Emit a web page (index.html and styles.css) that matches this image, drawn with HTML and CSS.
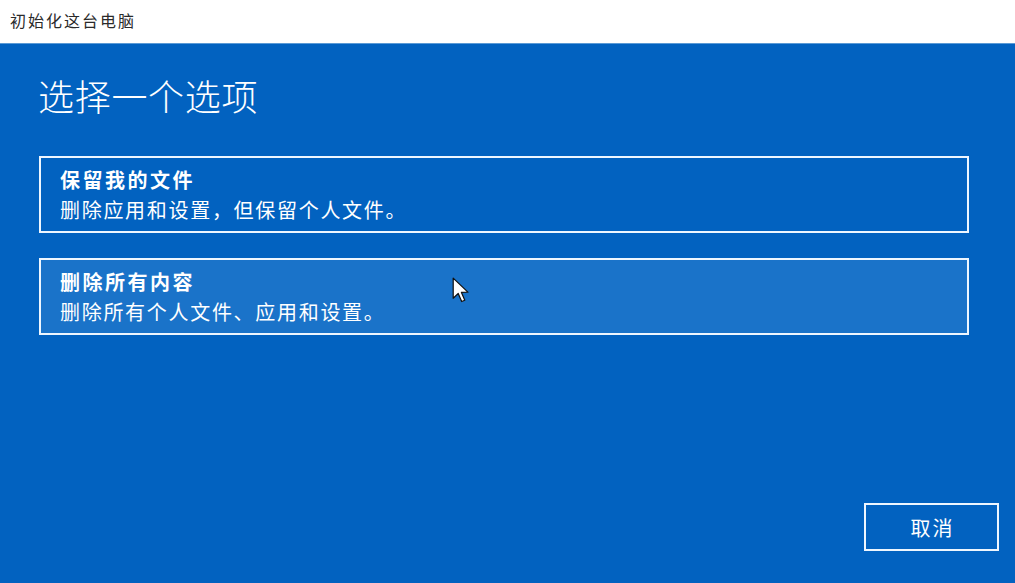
FILE: index.html
```html
<!DOCTYPE html>
<html lang="zh-CN">
<head>
    <meta charset="UTF-8">
    <meta name="viewport" content="width=device-width, initial-scale=1.0">
    <title>初始化这台电脑</title>
    <link rel="stylesheet" href="styles.css">
</head>
<body>
    <header class="titlebar">初始化这台电脑</header>
    <main class="content">
        <h1 class="heading">选择一个选项</h1>
        <div class="options">
            <div class="option">
                <div class="option-title">保留我的文件</div>
                <div class="option-desc">删除应用和设置，但保留个人文件。</div>
            </div>
            <div class="option option-hover">
                <div class="option-title">删除所有内容</div>
                <div class="option-desc">删除所有个人文件、应用和设置。</div>
            </div>
        </div>
        <div class="footer">
            <button class="cancel-btn" type="button">取消</button>
        </div>
    </main>
    <!-- mouse pointer sitting over the second option -->
    <svg class="cursor" width="18" height="29" viewBox="0 0 16 26">
        <path d="M1 1 L1 19 L5.5 14.8 L8.6 22 L11.4 20.8 L8.4 13.8 L14.2 13.6 Z" fill="#fff" stroke="#111" stroke-width="1.1" stroke-linejoin="round"/>
    </svg>
</body>
</html>
```

FILE: styles.css
```css
body {
    margin: 0;
    padding: 0;
    width: 1015px;
    height: 583px;
    overflow: hidden;
    background-color: #0262c0;
    font-family: "Noto Sans CJK SC", "Noto Sans", sans-serif;
    color: #ffffff;
    display: flex;
    flex-direction: column;
}

.titlebar {
    height: 44px;
    flex-shrink: 0;
    background-color: #ffffff;
    color: #2a2a2a;
    font-size: 16px;
    letter-spacing: 2px;
    line-height: 40px;
    padding-left: 10px;
    border-bottom: 1px solid #5a9ad6;
    box-sizing: border-box;
}

.content {
    flex: 1;
    display: flex;
    flex-direction: column;
    padding: 0 16px 32px 38px;
}

.heading {
    margin: 31px 0 0;
    font-size: 36px;
    font-weight: 300;
    letter-spacing: 0.7px;
    line-height: 40px;
}

.options {
    margin-top: 41px;
    margin-left: 1px;
    margin-right: 30px;
    display: flex;
    flex-direction: column;
    gap: 25px;
}

.option {
    border: 2px solid #eef6ff;
    height: 77px;
    box-sizing: border-box;
    padding: 7px 19px 6px;
}

.option-hover {
    background-color: #1a73c9;
}

.option-title {
    font-size: 20px;
    font-weight: bold;
    letter-spacing: 2.5px;
    line-height: 30px;
}

.option-desc {
    font-size: 20px;
    letter-spacing: 1.7px;
    line-height: 30px;
}

.footer {
    margin-top: auto;
    display: flex;
    justify-content: flex-end;
}

.cancel-btn {
    width: 135px;
    height: 48px;
    background-color: transparent;
    border: 2px solid #eef6ff;
    color: #ffffff;
    font-family: "Noto Sans CJK SC", "Noto Sans", sans-serif;
    font-size: 20px;
    letter-spacing: 2px;
    padding: 0 0 0 2px;
    cursor: pointer;
}

.cursor {
    position: absolute;
    left: 452px;
    top: 277px;
}
```
